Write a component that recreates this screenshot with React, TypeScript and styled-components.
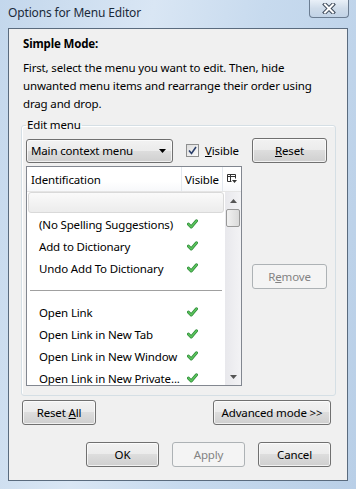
import React from "react";
import styled, { createGlobalStyle, css } from "styled-components";

const Global = createGlobalStyle`
  html, body { margin: 0; padding: 0; }
  body { font-family: "Noto Sans", "Open Sans", sans-serif; font-size: 11.5px; letter-spacing: -0.15px; color: #000; }
`;

const FONT = `"Noto Sans", "Open Sans", sans-serif`;

const Window = styled.div`
  width: 356px;
  height: 489px;
  box-sizing: border-box;
  display: flex;
  flex-direction: column;
  background: linear-gradient(100deg, #c3d7ec 0%, #d9e6f4 35%, #c7daee 60%, #b9cfe7 100%);
  font-family: ${FONT};
`;

const TitleBar = styled.div`
  height: 28px;
  display: flex;
  justify-content: space-between;
  align-items: flex-start;
  padding: 0 7px 0 8px;
  flex: none;
`;

const Title = styled.div`
  margin-top: 5px;
  font-size: 12px;
  line-height: 16px;
  color: #1b2a3a;
`;

const CloseButton = styled.div`
  width: 40px;
  height: 18px;
  box-sizing: border-box;
  border: 1px solid #6b7d92;
  border-top: none;
  border-radius: 0 0 4px 4px;
  background: linear-gradient(#e9f0f8, #cfdcea 50%, #c2d3e6);
  display: flex;
  align-items: center;
  justify-content: center;
`;

const Client = styled.div`
  flex: 1;
  margin: 0 8px 8px 8px;
  border: 1px solid #5a6b7e;
  background: #f0f0f0;
  display: flex;
  flex-direction: column;
  padding: 7px 0 0 0;
`;

const Heading = styled.div`
  font-weight: bold;
  line-height: 16px;
  margin-left: 14px;
`;

const Intro = styled.p`
  margin: 7px 10px 0 14px;
  line-height: 18px;
`;

const GroupBox = styled.fieldset`
  margin: 5px 11px 0 12px;
  padding: 6px 8px 9px 4px;
  border: 1px solid #d5dfe5;
  border-radius: 3px;
  box-shadow: inset 1px 1px 0 #fff;
  min-width: 0;
`;

const Legend = styled.legend`
  padding: 0 1px;
  line-height: 14px;
  margin-left: 0;
`;

const GroupGrid = styled.div`
  display: grid;
  grid-template-columns: 216px 75px;
  column-gap: 10px;
  row-gap: 3px;
  align-items: center;
`;

const ControlRow = styled.div`
  display: flex;
  align-items: center;
`;

const buttonFace = css`
  box-sizing: border-box;
  border: 1px solid #707070;
  border-radius: 3px;
  background: linear-gradient(#f2f2f2 0%, #ebebeb 49%, #dddddd 50%, #cfcfcf 100%);
  box-shadow: inset 0 0 0 1px rgba(255, 255, 255, 0.7);
  font-family: ${FONT};
  font-size: 11.5px;
  letter-spacing: -0.15px;
  color: #000;
`;

const Button = styled.button<{ $w?: number }>`
  ${buttonFace};
  width: ${(p) => (p.$w ? `${p.$w}px` : "75px")};
  height: 25px;
  padding: 0;
  display: flex;
  align-items: center;
  justify-content: center;
  &:disabled {
    border-color: #adb2b5;
    background: #f4f4f4;
    box-shadow: none;
    color: #838383;
  }
`;

const Key = styled.span`
  text-decoration: underline;
`;

const Dropdown = styled.div`
  ${buttonFace};
  width: 147px;
  height: 24px;
  display: flex;
  align-items: center;
  justify-content: space-between;
  padding: 0 6px 0 4px;
`;

const CheckLabel = styled.label`
  display: flex;
  align-items: center;
  margin-left: 13px;
  gap: 6px;
`;

const CheckBox = styled.span`
  width: 13px;
  height: 13px;
  box-sizing: border-box;
  border: 1px solid #8e8f8f;
  background: linear-gradient(135deg, #dcdcdc, #fbfbfb);
  display: flex;
  align-items: center;
  justify-content: center;
`;

const List = styled.div`
  height: 220px;
  box-sizing: border-box;
  border: 1px solid #828790;
  background: #fff;
  display: flex;
  flex-direction: column;
  overflow: hidden;
`;

const Header = styled.div`
  height: 24px;
  flex: none;
  display: grid;
  grid-template-columns: 155px 41px 1fr;
  border-bottom: 1px solid #e5e5e5;
  background: linear-gradient(#fff, #fff 60%, #f7f8fa);
`;

const HeaderCell = styled.div<{ $center?: boolean }>`
  display: flex;
  align-items: center;
  justify-content: ${(p) => (p.$center ? "center" : "flex-start")};
  padding-left: ${(p) => (p.$center ? "0" : "4px")};
  border-right: 1px solid #e3e8ee;
  &:last-child { border-right: none; }
`;

const Body = styled.div`
  flex: 1;
  display: flex;
  min-height: 0;
`;

const Rows = styled.div`
  flex: 1;
  display: flex;
  flex-direction: column;
`;

const DragRow = styled.div`
  height: 21px;
  flex: none;
  margin: 0 1px 0 1px;
  box-sizing: border-box;
  border: 1px solid #d9d9d9;
  border-radius: 3px;
  background: linear-gradient(#fafafa, #ececec);
`;

const Row = styled.div`
  height: 22px;
  flex: none;
  display: grid;
  grid-template-columns: 155px 1fr;
  align-items: center;
`;

const RowText = styled.span`
  padding-left: 12px;
  white-space: nowrap;
`;

const RowCheck = styled.span`
  display: flex;
  padding-left: 5px;
`;

const Separator = styled.div`
  height: 22px;
  flex: none;
  display: flex;
  align-items: center;
  padding: 0 3px 0 3px;
  &::after {
    content: "";
    flex: 1;
    height: 1px;
    background: #a0a0a0;
  }
`;

const ScrollBar = styled.div`
  width: 16px;
  flex: none;
  display: flex;
  flex-direction: column;
  align-items: center;
  background: linear-gradient(90deg, #e8e8ec, #f3f3f5);
`;

const Arrow = styled.div`
  height: 17px;
  width: 16px;
  display: flex;
  align-items: center;
  justify-content: center;
  flex: none;
`;

const Thumb = styled.div`
  width: 14px;
  height: 18px;
  box-sizing: border-box;
  border: 1px solid #989898;
  border-radius: 2px;
  background: linear-gradient(90deg, #f1f1f1, #dadada);
  flex: none;
`;

const Spacer = styled.div`
  flex: 1;
`;

const ActionRow = styled.div`
  display: flex;
  justify-content: space-between;
  margin: 4px 16px 0 13px;
`;

const DialogRow = styled.div`
  display: flex;
  justify-content: flex-end;
  gap: 13px;
  margin: 17px 16px 0 0;
`;

const GreenCheck = () => (
  <svg width="11" height="10" viewBox="0 0 11 10">
    <path d="M1.5 5.2 L4.2 8 L9.5 1.8" fill="none" stroke="#2e8b3a" strokeWidth="3" strokeLinecap="round" strokeLinejoin="round" />
    <path d="M1.5 5.2 L4.2 8 L9.5 1.8" fill="none" stroke="#5cc45c" strokeWidth="1.6" strokeLinecap="round" strokeLinejoin="round" />
  </svg>
);

const items1 = ["(No Spelling Suggestions)", "Add to Dictionary", "Undo Add To Dictionary"];
const items2 = ["Open Link", "Open Link in New Tab", "Open Link in New Window", "Open Link in New Private..."];

export default function App() {
  return (
    <>
      <Global />
      <Window>
        <TitleBar>
          <Title>Options for Menu Editor</Title>
          <CloseButton>
            <svg width="14" height="11" viewBox="0 0 14 11">
              <path d="M3 1.5 L11 9.5 M11 1.5 L3 9.5" stroke="#3e4a5a" strokeWidth="4" strokeLinecap="square" />
              <path d="M3 1.5 L11 9.5 M11 1.5 L3 9.5" stroke="#fff" strokeWidth="2" strokeLinecap="square" />
            </svg>
          </CloseButton>
        </TitleBar>
        <Client>
          <Heading>Simple Mode:</Heading>
          <Intro>
            First, select the menu you want to edit. Then, hide unwanted menu items and rearrange their order using
            drag and drop.
          </Intro>
          <GroupBox>
            <Legend>Edit menu</Legend>
            <GroupGrid>
              <ControlRow>
                <Dropdown>
                  <span>Main context menu</span>
                  <svg width="7" height="4" viewBox="0 0 7 4">
                    <path d="M0 0 H7 L3.5 4 Z" fill="#000" />
                  </svg>
                </Dropdown>
                <CheckLabel>
                  <CheckBox>
                    <svg width="9" height="9" viewBox="0 0 9 9">
                      <path d="M1 4.5 L3.5 7.5 L8 1" fill="none" stroke="#2b3f6b" strokeWidth="1.6" />
                    </svg>
                  </CheckBox>
                  <span>
                    <Key>V</Key>isible
                  </span>
                </CheckLabel>
              </ControlRow>
              <Button>
                <span>
                  <Key>R</Key>eset
                </span>
              </Button>
              <List>
                <Header>
                  <HeaderCell>Identification</HeaderCell>
                  <HeaderCell $center>Visible</HeaderCell>
                  <HeaderCell $center>
                    <svg width="10" height="10" viewBox="0 0 10 10">
                      <path d="M0.5 0.5 H8.5 V4.5 M0.5 0.5 V7.5 H4.5 M0.5 2.5 H8.5 M3.5 0.5 V7.5" fill="none" stroke="#333" strokeWidth="1" />
                      <path d="M5 6 H10 L7.5 9 Z" fill="#333" />
                    </svg>
                  </HeaderCell>
                </Header>
                <Body>
                  <Rows>
                    <DragRow />
                    {items1.map((t) => (
                      <Row key={t}>
                        <RowText>{t}</RowText>
                        <RowCheck>
                          <GreenCheck />
                        </RowCheck>
                      </Row>
                    ))}
                    <Separator />
                    {items2.map((t) => (
                      <Row key={t}>
                        <RowText>{t}</RowText>
                        <RowCheck>
                          <GreenCheck />
                        </RowCheck>
                      </Row>
                    ))}
                  </Rows>
                  <ScrollBar>
                    <Arrow>
                      <svg width="7" height="4" viewBox="0 0 7 4">
                        <path d="M0 4 H7 L3.5 0 Z" fill="#555" />
                      </svg>
                    </Arrow>
                    <Thumb />
                    <Spacer />
                    <Arrow>
                      <svg width="7" height="4" viewBox="0 0 7 4">
                        <path d="M0 0 H7 L3.5 4 Z" fill="#555" />
                      </svg>
                    </Arrow>
                  </ScrollBar>
                </Body>
              </List>
              <Button disabled>
                <span>
                  R<Key>e</Key>move
                </span>
              </Button>
            </GroupGrid>
          </GroupBox>
          <ActionRow>
            <Button $w={74}>
              <span>
                Reset <Key>A</Key>ll
              </span>
            </Button>
            <Button $w={118}>Advanced mode &gt;&gt;</Button>
          </ActionRow>
          <DialogRow>
            <Button $w={73}>OK</Button>
            <Button $w={73} disabled>
              Apply
            </Button>
            <Button $w={73}>Cancel</Button>
          </DialogRow>
        </Client>
      </Window>
    </>
  );
}
